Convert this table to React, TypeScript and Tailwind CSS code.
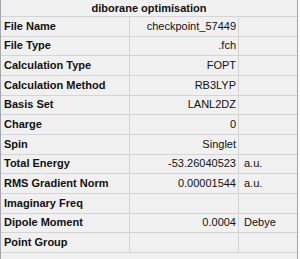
import React from 'react';

type Row = { label: string; value: string; unit?: string };

const rows: Row[] = [
  { label: 'File Name', value: 'checkpoint_57449' },
  { label: 'File Type', value: '.fch' },
  { label: 'Calculation Type', value: 'FOPT' },
  { label: 'Calculation Method', value: 'RB3LYP' },
  { label: 'Basis Set', value: 'LANL2DZ' },
  { label: 'Charge', value: '0' },
  { label: 'Spin', value: 'Singlet' },
  { label: 'Total Energy', value: '-53.26040523', unit: 'a.u.' },
  { label: 'RMS Gradient Norm', value: '0.00001544', unit: 'a.u.' },
  { label: 'Imaginary Freq', value: '' },
  { label: 'Dipole Moment', value: '0.0004', unit: 'Debye' },
  { label: 'Point Group', value: '' },
];

export default function App() {
  return (
    <div
      className="w-[300px] h-[259px] bg-white overflow-hidden text-[11px] text-[#111] leading-none"
      style={{ fontFamily: '"Liberation Sans", Arial, sans-serif' }}
    >
      <div className="w-[298px] h-full bg-[#f0f0f0] border-l border-r border-[#a3a7ab] flex flex-col">
        {/* Title */}
        <div className="h-[17px] flex items-center justify-center font-bold border-b border-[#d4d4d4]">
          diborane optimisation
        </div>

        {/* Property rows */}
        {rows.map((row) => (
          <div
            key={row.label}
            className="h-[19.67px] grid grid-cols-[129px_109px_1fr] border-b border-[#d4d4d4]"
          >
            <div className="flex items-center pl-[3px] font-bold border-r border-[#d4d4d4]">
              {row.label}
            </div>
            <div className="flex items-center justify-end pr-[2px] border-r border-[#d4d4d4]">
              {row.value}
            </div>
            <div className="flex items-center pl-[5px]">{row.unit}</div>
          </div>
        ))}
      </div>
    </div>
  );
}
